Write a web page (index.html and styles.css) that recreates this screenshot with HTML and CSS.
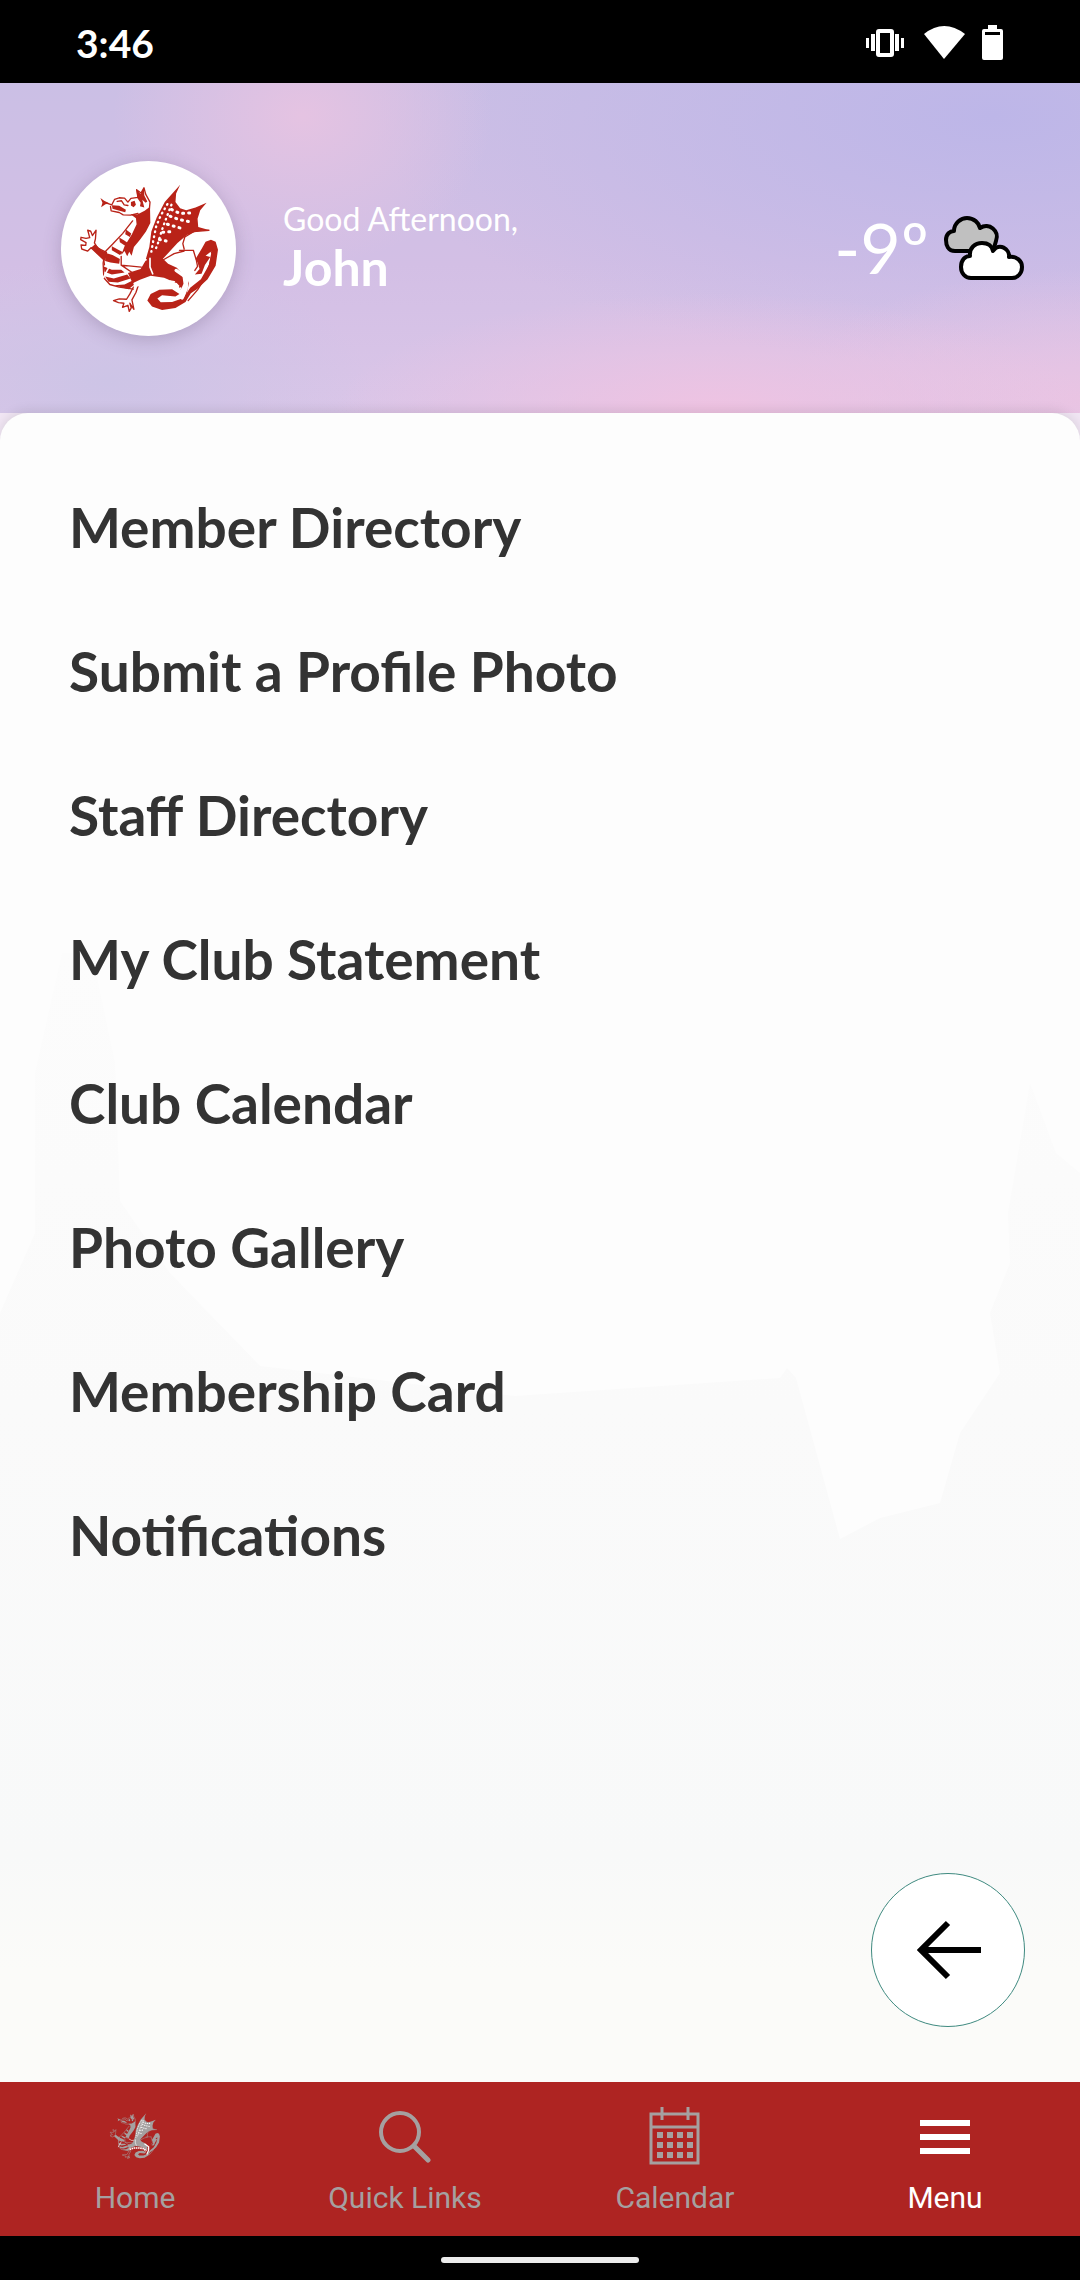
FILE: index.html
```html
<!DOCTYPE html>
<html lang="en">
<head>
<meta charset="utf-8">
<meta name="viewport" content="width=device-width, initial-scale=1">
<title>Club Menu</title>
<link rel="stylesheet" href="styles.css">
</head>
<body>
<svg class="symbols" aria-hidden="true">
  <symbol id="dragon" viewBox="80 95 430 400">
    <g fill="none" stroke="currentColor" stroke-width="4" stroke-linejoin="round" stroke-linecap="round">
      <path d="M166 160L184 166L192 150L206 145L222 146L232 158L241 147L262 144L258 121L271 131L280 115L285 134L298 158L296 180M180 171L182 184L206 189L218 196L240 197L262 192M200 156L213 154L221 166L232 168"/>
      <path d="M122 294L112 304L94 298L92 286L106 287L107 279L91 270L92 263L107 266L118 264L112 242L121 245L126 258L137 242L135 268L132 280L142 295L168 308M122 294L160 330L162 345"/>
      <path d="M386 302L408 302L428 302M400 298L396 282L402 262L428 246L474 242M338 330L370 312L400 304M428 304L436 330L440 350L432 362"/>
      <path d="M248 412L238 432L228 448L206 447L189 452L204 458L220 460L216 472L232 466L236 484L242 474L238 460L250 478L244 450L256 428L262 410"/>
      <path d="M246 214L216 252L186 284L164 306L158 340L160 384L178 404L206 412L248 418M212 320L212 346L250 372M212 346L272 352"/>
      <path d="M386 368L404 380L412 400L404 440L390 452M412 452L440 420L462 384L476 344L484 312L478 302"/>
    </g>
    <g fill="currentColor">
      <path d="M150 146L161 154L178 162L165 164L152 173L156 160Z"/>
      <path d="M184 167L206 169L226 181L224 188L207 184L186 178Z"/>
      <path d="M241 158L252 154L256 166L249 173L241 168ZM258 121L270 134L280 114L281 138L290 156L285 160L275 151L281 174L268 170L270 160L260 146Z"/>
      <path d="M240 194L260 195L282 184L298 172L299 220L286 246L268 270L250 292L243 318L236 306L230 320L222 304L212 316L222 290L244 254L258 224L256 206Z"/>
      <path d="M388 106L376 132L374 158L388 176L406 182L434 174L467 160L448 182L440 208L442 232L474 241L436 246L408 256L380 280L356 306L334 330L302 322L285 330L296 292L302 246L318 204L342 158Z"/>
      <path d="M290 324L300 312L336 326L352 342L378 354L394 372L398 402L390 420L378 400L340 384L300 378L268 390L246 400L232 370L270 358Z"/>
      <path d="M432 374L446 358L440 338L434 328L454 294L464 276L480 270L494 276L501 300L494 348L470 388L438 418L420 430L404 456L374 474L334 480L304 470L290 452L300 432L326 420L364 418L386 432L374 440L334 436L320 446L330 457L364 456L398 444L418 414L450 388L474 346L482 304L464 318L478 322L462 346L452 372Z"/>
      <path d="M134 284L154 302L170 310L164 334L140 312L122 294Z"/>
      <path d="M166 310L186 316L208 328L206 342L180 338L164 334ZM160 350L184 360L212 360L222 368L184 374L162 366ZM164 380L190 386L230 374L240 386L202 398L174 396ZM190 406L222 404L246 392L254 402L234 418ZM184 290L206 302L218 308L208 316L184 302ZM206 264L220 272L232 280L226 290L208 278ZM226 240L242 252L238 262L224 254Z"/>
    </g>
    <g fill="none" class="dragon-detail" stroke-linecap="round">
      <path stroke-width="7" stroke-dasharray="2 13" d="M350 164L330 198L316 232L308 272L302 306M362 166L348 202L334 240L322 280L312 306"/>
      <path stroke-width="9" stroke-dasharray="3 15" d="M362 180L388 192L424 190M358 200L384 210L414 216M350 224L376 232L392 236M336 248L364 246M326 270L346 274"/>
      <path stroke-width="14" stroke-dasharray="13 5" stroke-linecap="butt" d="M250 406L288 394L330 394L368 400L388 420"/>
      <path stroke-width="10" d="M376 362L408 384L406 416L394 444"/>
      <path stroke-width="5" d="M298 326L298 352L306 372M246 320L268 332L286 330M180 344L158 384"/>
    </g>
  </symbol>
</svg>

<div class="app">
  <div class="status">
    <span class="clock">3:46</span>
    <svg class="status-icons" width="138" height="36" viewBox="0 0 138 36" fill="#fff" aria-label="Vibrate, Wi-Fi, battery">
      <rect x="12" y="6" width="14" height="24" rx="1" fill="none" stroke="#fff" stroke-width="4"/>
      <path d="M0 13h3v10H0zM5 9h4v17H5zM29 9h4v17h-4zM35 13h3v10h-3z"/>
      <path d="M58 9Q78-7 99 9L78 34Z"/>
      <path fill-rule="evenodd" d="M122 0h9v4h4q2 0 2 2v27q0 2-2 2h-17q-2 0-2-2V6q0-2 2-2h4zM119 7v3h15V7z"/>
    </svg>
  </div>

  <header class="hero">
    <div class="avatar"><svg width="144" height="134" aria-label="Club crest"><use href="#dragon"/></svg></div>
    <div class="greeting">
      <p class="hello">Good Afternoon,</p>
      <h1 class="name">John</h1>
    </div>
    <div class="weather">
      <span class="temp">-9º</span>
      <svg width="82" height="66" viewBox="0 0 82 66" stroke="#000" stroke-width="4" stroke-linejoin="round" aria-label="Cloudy">
        <path fill="#c0c0c0" d="M12 36C5 36 3 30 3 25C3 19 7 16 11 16C11 8 18 3 24 3C31 3 36 8 37 13C46 7 57 16 53 26L50 36Z"/>
        <path fill="#fff" d="M28 63C22 63 18 58 18 52C18 45 22 41 27 41C26 33 32 28 39 28C45 28 49 31 50 36C56 27 67 34 66 42C74 41 79 46 79 52C79 58 75 63 69 63Z"/>
      </svg>
    </div>
  </header>

  <main class="sheet">
    <svg class="scene" viewBox="0 0 1080 1669" preserveAspectRatio="none" aria-hidden="true">
      <defs>
        <linearGradient id="fade" x1="0" y1="540" x2="0" y2="1669" gradientUnits="userSpaceOnUse">
          <stop offset="0" stop-color="#fcfcfc"/>
          <stop offset=".4" stop-color="#fafafa"/>
          <stop offset=".8" stop-color="#f8f9f9"/>
          <stop offset=".9" stop-color="#fbfbf9"/>
          <stop offset="1" stop-color="#fbfbf9"/>
        </linearGradient>
      </defs>
      <path fill="url(#fade)" d="M0 900L35 820V660L62 540H92L115 650L120 788L170 860L260 953L515 983L780 965L787 955L796 965L840 1126L880 1105L940 1090L960 1020L1000 960L990 900L1010 850L1008 800L1030 670L1056 740L1080 760V1669H0Z"/>
    </svg>
    <ul class="menu">
      <li><a href="#members">Member Directory</a></li>
      <li><a href="#photo">Submit a Profile Photo</a></li>
      <li><a href="#staff">Staff Directory</a></li>
      <li><a href="#statement">My Club Statement</a></li>
      <li><a href="#calendar">Club Calendar</a></li>
      <li><a href="#gallery">Photo Gallery</a></li>
      <li><a href="#card">Membership Card</a></li>
      <li><a href="#notifications">Notifications</a></li>
    </ul>
    <button class="back" type="button" aria-label="Back">
      <svg width="66" height="60" viewBox="0 0 66 60" fill="none" stroke="#000" stroke-width="6"><path d="M33 3L6 30L33 57M6 30H66"/></svg>
    </button>
  </main>

  <nav class="tabs">
    <a class="tab" href="#home">
      <svg width="52" height="60"><use href="#dragon"/></svg>
      <span>Home</span>
    </a>
    <a class="tab" href="#links">
      <svg width="52" height="60" viewBox="0 0 52 60" fill="none" stroke="currentColor"><circle cx="21" cy="26" r="19" stroke-width="4"/><path stroke-width="5" stroke-linecap="round" d="M35 40L49 54"/></svg>
      <span>Quick Links</span>
    </a>
    <a class="tab" href="#events">
      <svg width="52" height="60" viewBox="0 0 52 60" fill="none" stroke="currentColor" stroke-width="3"><rect x="2" y="8" width="47" height="49"/><path d="M2 21H49M13 1V14M39 1V14"/><path stroke-width="6" stroke-dasharray="6 4" d="M8 29H44M8 39H44M8 49H44"/></svg>
      <span>Calendar</span>
    </a>
    <a class="tab tab-active" href="#menu" aria-current="page">
      <svg width="52" height="60" viewBox="0 0 52 60" fill="currentColor"><path d="M1 14h50v6H1zM1 28h50v6H1zM1 42h50v6H1z"/></svg>
      <span>Menu</span>
    </a>
  </nav>
  <div class="gesture"><span class="handle"></span></div>
</div>
</body>
</html>
```
FILE: styles.css
```css
* { box-sizing: border-box; }
body { margin: 0; background: #000; font-family: Lato, "Open Sans", sans-serif; }
.symbols { position: absolute; width: 0; height: 0; }
.app { display: flex; flex-direction: column; min-height: 100vh; background: #f1e6f4; }

.status { display: flex; align-items: center; justify-content: space-between; height: 83px; padding: 2px 76px 0; background: #000; color: #fff; }
.clock { font-size: 39px; font-weight: 700; }

.hero {
  display: flex; align-items: center; height: 330px; padding: 0 55px 0 61px; color: #fff;
  background:
    radial-gradient(ellipse 380px 120px at 66% 100%, #efc3e2 0, #efc3e200 100%),
    radial-gradient(ellipse 190px 150px at 28% 10%, #e5c3e2 0, #e5c3e200 100%),
    radial-gradient(ellipse 300px 130px at 100% 96%, #e9c4e3 0, #e9c4e300 100%),
    radial-gradient(ellipse 620px 250px at 92% 10%, #bdb6e8 0, #bdb6e800 100%),
    radial-gradient(ellipse 260px 120px at 10% 90%, #cdc4e6 0, #cdc4e600 100%),
    linear-gradient(#cbbfe5, #d3bfe5 55%, #dac6e8);
}
.avatar { display: flex; align-items: center; justify-content: center; width: 175px; height: 175px; border-radius: 50%; background: #fff; color: #b92318; box-shadow: 0 4px 18px #50406040; }
.dragon-detail { stroke: #fff; }
.greeting { flex: 1; padding: 0 0 2px 47px; }
.hello { margin: 0; font-size: 32px; line-height: 40px; }
.name { margin: 0; font-size: 50px; line-height: 56px; font-weight: 700; }
.weather { display: flex; align-items: center; gap: 14px; }
.temp { padding-bottom: 2px; font-size: 70px; line-height: 80px; }

.sheet {
  position: relative; flex: 1; display: flex; flex-direction: column; justify-content: space-between; padding: 42px 55px 55px 69px;
  border-radius: 28px 28px 0 0; overflow: hidden; background: #fdfdfd; box-shadow: 0 -2px 12px #0000001a;
}
.scene { position: absolute; inset: 0; width: 100%; height: 100%; }
.menu { position: relative; margin: 0; padding: 0; list-style: none; }
.menu a { display: flex; align-items: center; height: 144px; color: #333; font-size: 55px; font-weight: 700; text-decoration: none; }
.back { position: relative; display: flex; align-items: center; justify-content: center; align-self: flex-end; width: 154px; height: 154px; padding: 0; border: 1px solid #3f8a80; border-radius: 50%; background: #fff; }

.tabs { position: relative; display: grid; grid-template-columns: repeat(4, 1fr); height: 154px; background: #ae2422; }
.tab { display: flex; flex-direction: column; align-items: center; gap: 14px; padding-top: 24px; color: #a5a0a0; font: 30px/36px Roboto, sans-serif; text-decoration: none; }
.tab-active { color: #fff; }
.tab .dragon-detail { stroke: #ae2422; }
.gesture { display: flex; align-items: center; justify-content: center; height: 44px; padding-top: 4px; background: #000; }
.handle { width: 198px; height: 6px; border-radius: 3px; background: #ececec; }
```
